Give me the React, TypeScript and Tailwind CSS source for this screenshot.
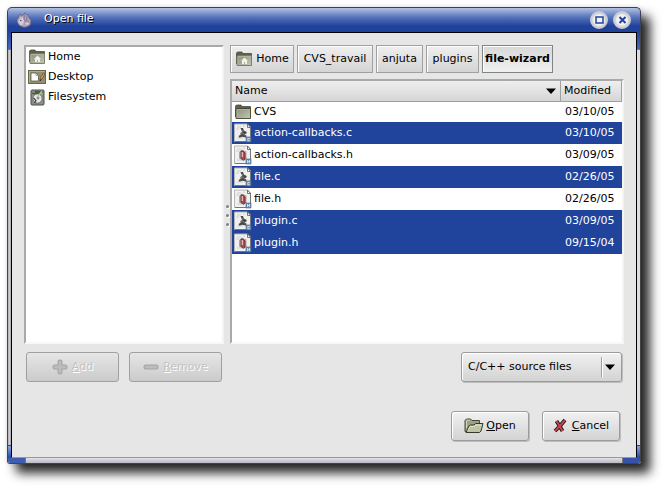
import React from "react";

const face = "font-['DejaVu_Sans','Noto_Sans',sans-serif] text-[11px] leading-[14px]";

function MascotIcon() {
  return (
    <svg width="16" height="16" viewBox="0 0 16 16" aria-hidden="true">
      <path d="M3.500 2 5.500 3.500 7.500 3 9 .8 10.500 3l1.500-.5 1 3 2 3-.5 4-2.500 2-4 1-3.500-1.500L1.500 11 .8 8 2.500 5.500Z" fill="#a8a0b8" stroke="#625b78" strokeWidth=".7" />
      <path d="M8.500 3 8 7l2 3M11 4l-.5 4 2.500 3" fill="none" stroke="#81789a" />
      <path d="M4 6 6.500 5 8 9 7 13 4.500 13 2 10Z" fill="#d6cad6" />
      <path d="M9 11l3-1 1.500 1.500L10 13.500Z" fill="#cdc5d6" />
      <path d="M2.500 12l2 1.500 1.500-.5" fill="none" stroke="#d88ca4" />
      <circle cx="4.800" cy="8.500" r=".8" fill="#4a4260" />
    </svg>
  );
}

function FolderIcon({ home = false }: { home?: boolean }) {
  return (
    <svg width="18" height="16" viewBox="0 0 18 16" aria-hidden="true" className="shrink-0">
      <defs>
        <linearGradient id="folder-front" x1="0" y1="0" x2="1" y2="1">
          <stop offset="0" stopColor="#8b8f78" />
          <stop offset="1" stopColor="#c3c7b4" />
        </linearGradient>
      </defs>
      <path d="M1.500 13V2l1-1h4.500l1 1.500h8.500V5h-14Z" fill="#5d614c" stroke="#4a4e3d" strokeWidth=".8" />
      <path d="M2 5.500 3 4.500h13.500v10H2Z" fill="url(#folder-front)" stroke={home ? "#74785f" : "#40442f"} strokeWidth=".9" />
      <path d="M3 13.500V5.500h13" fill="none" stroke="#b4b8a4" strokeWidth=".8" />
      {home && <path d="M9.500 6.500 6 10h1v3h2v-2h1v2h2v-3h1Z" fill="#f1f2ea" />}
    </svg>
  );
}

function DesktopIcon() {
  return (
    <svg width="18" height="14" viewBox="0 0 18 14" aria-hidden="true" className="shrink-0">
      <rect x=".5" y=".5" width="17" height="13" fill="#8f9170" stroke="#64664d" />
      <path d="M1.500 12.500v-11h15" fill="none" stroke="#aeb08e" />
      <path d="M3 3h5l2.500 2.500V11H3Z" fill="#fff" stroke="#5d5f4a" strokeWidth=".8" />
      <path d="M8 3v2.500h2.500" fill="none" stroke="#888" strokeWidth=".7" />
      <path d="m12 10.500.5-3 3-4.500 1.500 1-3 5Z" fill="#dfa45e" stroke="#5d3a1e" strokeWidth=".7" />
      <path d="m12 11 1-1.500" stroke="#222" />
    </svg>
  );
}

function DiskIcon() {
  return (
    <svg width="15" height="17" viewBox="0 0 15 17" aria-hidden="true" className="shrink-0">
      <rect x="1" y="1" width="13" height="15" rx="1" fill="#8b8f8b" stroke="#4b4f4b" />
      <path d="M2 2h11v2L8 6 2 5Z" fill="#4b5a40" />
      <path d="M2 3h3M10 5l3-1" stroke="#aebfa4" />
      <circle cx="7.500" cy="9.500" r="4.600" fill="#e4e6e4" stroke="#666" strokeWidth=".8" />
      <circle cx="8" cy="9" r="1.400" fill="#8b8f8b" />
      <path d="m8 7 4-5" stroke="#a4cf86" strokeWidth="1.300" />
      <path d="M3.500 9 6 11.500 4.500 14" fill="none" stroke="#444" strokeWidth="1.200" />
    </svg>
  );
}

function SourceIcon({ header }: { header: boolean }) {
  return (
    <svg width="18" height="20" viewBox="0 0 18 20" aria-hidden="true" className="shrink-0">
      <path d="M.5 1h13l3 3v14.500H.5Z" fill="#f0f0f0" stroke="#b5b5b5" />
      <path d="M16.500 4v14.500H1" fill="none" stroke="#777" />
      <path d="M13.500 1v3.500h3Z" fill="#fff" stroke="#555" strokeWidth=".8" />
      <path d="M3 4h4M2 6h3M3 15h6M9 3h2" stroke="#cfcfcf" />
      {header ? (
        <>
          <path d="M5 7l3-2.500 4.500 2V14l-3 2L5 13.500Z" fill="#aaa5a5" />
          <path d="M7 6h2l2 2v6l-1.500 1L7 13.500Z" fill="#b4484d" stroke="#6b2c2f" strokeWidth=".8" />
          <path d="M8.300 7v5" stroke="#f0c0bc" strokeWidth="1.200" />
        </>
      ) : (
        <>
          <path d="M6.500 5h2.500l.8 2.500 3 1.500-.6 1.800-1.700.4 2.300 1.800-1.300 1.500-3.500-.8-2.500 1-1-1.700 2.500-1.500-.8-1.500 2-1Z" fill="#484848" />
          <path d="M6 11.500l3-1.500 2 2.500M8 7l.8 1.500" fill="none" stroke="#8c8c8c" strokeWidth=".8" />
        </>
      )}
      <rect x="12" y="14" width="5" height="5" fill="#6e92b4" stroke="#436585" strokeWidth=".6" />
      {header ? (
        <path d="M13.500 15v3M15.500 15v3M13.500 16.500h2" stroke="#dce8f3" strokeWidth=".8" />
      ) : (
        <path d="M15.800 15.500h-2v2.200h2" fill="none" stroke="#dce8f3" strokeWidth=".8" />
      )}
    </svg>
  );
}

function OpenIcon() {
  return (
    <svg width="20" height="16" viewBox="0 0 20 16" aria-hidden="true">
      <path d="M1 13.500V2.500L2.500 1h4L8 2.500h7.500V6L4 14Z" fill="#9da184" stroke="#45483a" />
      <path d="M2 14.500 5 8l1.500-1H10l1.500-1.500H19L17 13l-1.500 1.500Z" fill="#bfc3a3" stroke="#35382a" />
      <path d="M4 12.500 6 8.500h4.500L12 7h5.500" fill="none" stroke="#e3e6cd" />
      <path d="M2.500 10V3L3 2.300h3" fill="none" stroke="#d3d6bf" />
    </svg>
  );
}

function CancelIcon() {
  return (
    <svg width="14" height="16" viewBox="0 0 14 16" aria-hidden="true">
      <path d="M3.500 3 6 7l3.500 6M12 2 7 8l-5 5" fill="none" stroke="#1d1112" strokeWidth="3.800" strokeLinejoin="round" />
      <path d="M3.500 3 6 7l3.500 6M12 2 7 8l-5 5" fill="none" stroke="#c04852" strokeWidth="2" />
    </svg>
  );
}

function SignIcon({ plus }: { plus: boolean }) {
  const d = plus ? "M8 3v10M3 8h10" : "M3 8h10";
  return (
    <svg width="16" height="16" viewBox="0 0 16 16" aria-hidden="true">
      <path d={d} stroke="#a3a3a3" strokeWidth="5" strokeLinecap="round" />
      <path d={d} stroke="#bcbcbc" strokeWidth="3" strokeLinecap="round" />
    </svg>
  );
}

function Arrow() {
  return (
    <svg width="10" height="6" viewBox="0 0 10 6" aria-hidden="true" className="shrink-0">
      <path d="M0 .5h10L5 6Z" fill="#000" />
    </svg>
  );
}

function TitleButton({ label, children }: { label: string; children: React.ReactNode }) {
  return (
    <button aria-label={label} className="flex size-[18px] items-center justify-center rounded-full border-2 border-[#c9cbd4] bg-[#f3f3f3] shadow-[inset_0_0_2px_#999]">
      <svg width="9" height="8" viewBox="0 0 9 8" aria-hidden="true" fill="none" stroke="#2343a0">
        {children}
      </svg>
    </button>
  );
}

function Side({ right = false }: { right?: boolean }) {
  return (
    <div className={`flex w-1 shrink-0 flex-col border-[#444] ${right ? "border-r" : "border-l"}`}>
      <div className="h-[17px] bg-linear-to-b from-[#21439c] to-[#4a68b8]" />
      <div className={`flex-1 border-t border-[#777] ${right ? "bg-[#e0dbe2]" : "bg-linear-to-r from-[#aaa7ad] via-[#d0ced4] to-[#a09fa3]"}`} />
      <div className="h-[13px] border-t border-[#444] bg-linear-to-b from-[#8ba5df] to-[#2147a5]" />
    </div>
  );
}

const pathBase = "flex h-7 items-center justify-center whitespace-nowrap border shadow-[inset_1px_1px_0_#fff]";

function PathButton({ width, active = false, children }: { width: string; active?: boolean; children: React.ReactNode }) {
  return (
    <button
      className={`${pathBase} ${width} ${active ? "border-[#7f8582] bg-linear-to-b from-[#d8d8d8] to-[#f0f0f0] font-bold" : "border-[#a0a0a0] bg-linear-to-b from-[#efefef] to-[#d4d4d4]"}`}
    >
      {children}
    </button>
  );
}

const raised = "rounded-[3px] border border-[#9c9c9c] bg-linear-to-b from-[#f1f1f1] to-[#d3d3d3] shadow-[inset_1px_1px_0_#fff,1px_1px_0_#bdbdbd]";
const disabled = "flex h-[30px] w-[93px] items-center justify-center gap-1 rounded-[3px] border border-[#a0a0a0] bg-linear-to-b from-[#e6e6e6] to-[#cbcbcb] text-[#c3c3c3] [text-shadow:1px_1px_0_#fff]";
const sunken = "border-2 border-t-[#a9a9a9] border-l-[#a9a9a9] border-r-[#f3f3f3] border-b-[#f8f8f8] bg-white";

const files = [
  { name: "CVS", date: "03/10/05", selected: false },
  { name: "action-callbacks.c", date: "03/10/05", selected: true },
  { name: "action-callbacks.h", date: "03/09/05", selected: false },
  { name: "file.c", date: "02/26/05", selected: true },
  { name: "file.h", date: "02/26/05", selected: false },
  { name: "plugin.c", date: "03/09/05", selected: true },
  { name: "plugin.h", date: "09/15/04", selected: true },
];

const places = [
  { name: "Home", icon: <FolderIcon home /> },
  { name: "Desktop", icon: <DesktopIcon /> },
  { name: "Filesystem", icon: <DiskIcon /> },
];

export default function App() {
  return (
    <div className={`bg-white pt-[7px] pr-[23px] pb-6 pl-[7px] text-black ${face}`}>
      <div role="dialog" aria-label="Open file" className="rounded-t-[5px] rounded-b-[3px] shadow-[9px_9px_11px_#000000d8,0_0_4px_#00000020]">
        <header className="flex h-[25px] items-center rounded-t-[5px] border border-b-0 border-[#3b4256] bg-linear-to-b from-[#b4c2e3] via-[#5470b8] via-40% to-[#20429b] to-75% pr-[9px] pl-2">
          <MascotIcon />
          <h1 className="ml-3 flex-1 pb-[2px] text-white [text-shadow:1px_1px_0_#000]">Open file</h1>
          <div className="flex gap-[5px]">
            <TitleButton label="Maximize">
              <path d="M1 1h7v6H1Z" strokeWidth="1.500" />
            </TitleButton>
            <TitleButton label="Close">
              <path d="m1.500 1 6 6m0-6-6 6" strokeWidth="2" />
            </TitleButton>
          </div>
        </header>

        <div className="flex">
          <Side />
          <main className="min-w-0 flex-1 border border-black border-b-[#999] bg-[#e6e6e6] pt-3 pr-3 pb-4 pl-3">
            <div className="flex">
              <section className="flex w-[200px] shrink-0 flex-col">
                <ul className={`h-[299px] ${sunken}`}>
                  {places.map((p) => (
                    <li key={p.name} className="flex h-5 items-center gap-[2px] pl-[2px]">
                      <span className="flex w-[18px] justify-center">{p.icon}</span>
                      {p.name}
                    </li>
                  ))}
                </ul>
                <div className="mt-2 flex gap-[10px] pl-[2px]">
                  <button disabled className={disabled}>
                    <SignIcon plus />
                    <span><u>A</u>dd</span>
                  </button>
                  <button disabled className={disabled}>
                    <SignIcon plus={false} />
                    <span><u>R</u>emove</span>
                  </button>
                </div>
              </section>

              <div className="flex h-[340px] w-[6px] shrink-0 flex-col items-center justify-center gap-[6px]">
                <i className="size-[3px] rounded-full bg-[#808080] shadow-[1px_1px_0_#fff]" />
                <i className="size-[3px] rounded-full bg-[#808080] shadow-[1px_1px_0_#fff]" />
                <i className="size-[3px] rounded-full bg-[#808080] shadow-[1px_1px_0_#fff]" />
              </div>

              <section className="flex min-w-0 flex-1 flex-col">
                <nav className="flex gap-[3px]">
                  <PathButton width="w-16">
                    <span className="mr-[3px]"><FolderIcon home /></span>Home
                  </PathButton>
                  <PathButton width="w-[76px]">CVS_travail</PathButton>
                  <PathButton width="w-[47px]">anjuta</PathButton>
                  <PathButton width="w-[53px]">plugins</PathButton>
                  <PathButton width="w-[71px]" active>file-wizard</PathButton>
                </nav>

                <div className={`mt-[6px] h-[265px] ${sunken}`}>
                  <table className="w-full table-fixed border-separate border-spacing-0">
                    <thead>
                      <tr className="h-[21px] bg-linear-to-b from-[#efefef] to-[#d4d4d4]">
                        <th className="border-r border-b border-[#a0a0a0] p-0 pr-1 pl-[3px] font-normal">
                          <span className="flex items-center justify-between">Name<Arrow /></span>
                        </th>
                        <th className="w-[61px] border-r border-b border-[#a0a0a0] p-0 pl-[3px] text-left font-normal">Modified</th>
                      </tr>
                    </thead>
                    <tbody>
                      {files.map((f) => (
                        <tr key={f.name} className={f.selected ? "bg-[#20439c] text-white" : ""}>
                          <td className="p-0 pl-[2px]">
                            <span className={`flex items-center gap-[2px] ${f.name === "CVS" ? "h-5" : "h-[22px]"}`}>
                              {f.name === "CVS" ? <FolderIcon /> : <SourceIcon header={f.name.endsWith(".h")} />}
                              {f.name}
                            </span>
                          </td>
                          <td className="p-0 pl-1">{f.date}</td>
                        </tr>
                      ))}
                    </tbody>
                  </table>
                </div>

                <div className={`mt-2 mr-[2px] grid h-[30px] w-[161px] items-center self-end ${raised}`}>
                  <select aria-label="File type" defaultValue="c" className="col-start-1 row-start-1 h-7 w-full appearance-none bg-transparent pl-[6px] outline-none">
                    <option value="c">C/C++ source files</option>
                  </select>
                  <span className="pointer-events-none col-start-1 row-start-1 flex h-5 w-5 items-center justify-center justify-self-end border-l border-[#a0a0a0] pr-1 shadow-[inset_1px_0_0_#fff]">
                    <Arrow />
                  </span>
                </div>
              </section>
            </div>

            <footer className="mt-[26px] flex justify-end gap-[13px] pr-1">
              <button className={`flex h-[30px] w-[78px] items-center justify-center gap-[2px] ${raised}`}>
                <OpenIcon />
                <span><u>O</u>pen</span>
              </button>
              <button className={`flex h-[30px] w-[78px] items-center justify-center gap-[5px] ${raised}`}>
                <CancelIcon />
                <span><u>C</u>ancel</span>
              </button>
            </footer>
          </main>
          <Side right />
        </div>

        <div className="flex h-[6px] overflow-hidden rounded-b-[3px] border border-t-0 border-[#444]">
          <div className="w-[17px] bg-[#3e5cb0]" />
          <div className="flex-1 border-x border-[#777] bg-linear-to-b from-[#e3e1e8] to-[#bab9c2]" />
          <div className="w-[17px] bg-[#3553aa]" />
        </div>
      </div>
    </div>
  );
}
